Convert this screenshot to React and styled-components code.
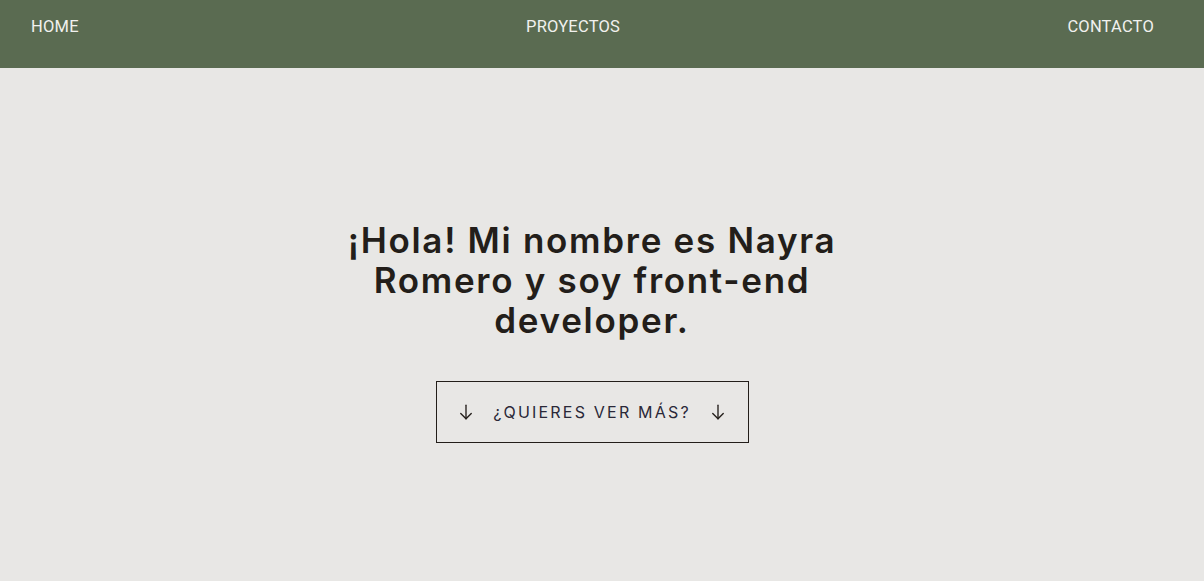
import React from "react";
import styled, { createGlobalStyle } from "styled-components";

const GlobalStyle = createGlobalStyle`
  body {
    margin: 0;
    background-color: #e8e7e5;
    font-family: Inter, "Liberation Sans", sans-serif;
  }
`;

const Header = styled.header`
  height: 68px;
  background-color: #5a6b51;
  box-sizing: border-box;
  padding: 17px 50px 0 31px;
`;

const Nav = styled.ul`
  list-style: none;
  margin: 0;
  padding: 0;
  display: flex;
  justify-content: space-between;
`;

const NavItem = styled.li`
  font-family: Roboto, "Liberation Sans", sans-serif;
  font-size: 16.5px;
  letter-spacing: 0.2px;
  color: #f1f1ee;
  text-transform: uppercase;
  line-height: 20px;
`;

const Main = styled.main`
  display: flex;
  flex-direction: column;
  align-items: center;
  padding: 152px 20px 0 0;
`;

const Title = styled.h1`
  margin: 0;
  max-width: 540px;
  text-align: center;
  font-size: 35px;
  line-height: 40px;
  font-weight: 600;
  letter-spacing: 1.7px;
  color: #231e1a;
`;

const MoreButton = styled.button`
  margin-top: 41px;
  width: 313px;
  height: 62px;
  display: flex;
  align-items: center;
  justify-content: center;
  gap: 18px;
  background: transparent;
  border: 1px solid #231e1a;
  font-family: Inter, "Liberation Sans", sans-serif;
  font-size: 16px;
  letter-spacing: 2.2px;
  color: #2a2838;
  cursor: pointer;
`;

const Arrow = () => (
  <svg width="18" height="18" viewBox="0 0 24 24" fill="none" stroke="#231e1a" strokeWidth="1.8" strokeLinecap="round" strokeLinejoin="round">
    <path d="M12 3v18" />
    <path d="M5 14l7 7 7-7" />
  </svg>
);

const App = () => {
  return (
    <>
      <GlobalStyle />
      <Header>
        <Nav>
          <NavItem>Home</NavItem>
          <NavItem>Proyectos</NavItem>
          <NavItem>Contacto</NavItem>
        </Nav>
      </Header>
      <Main>
        <Title>¡Hola! Mi nombre es Nayra Romero y soy front-end developer.</Title>
        <MoreButton>
          <Arrow />
          ¿QUIERES VER MÁS?
          <Arrow />
        </MoreButton>
      </Main>
    </>
  );
};

export default App;
